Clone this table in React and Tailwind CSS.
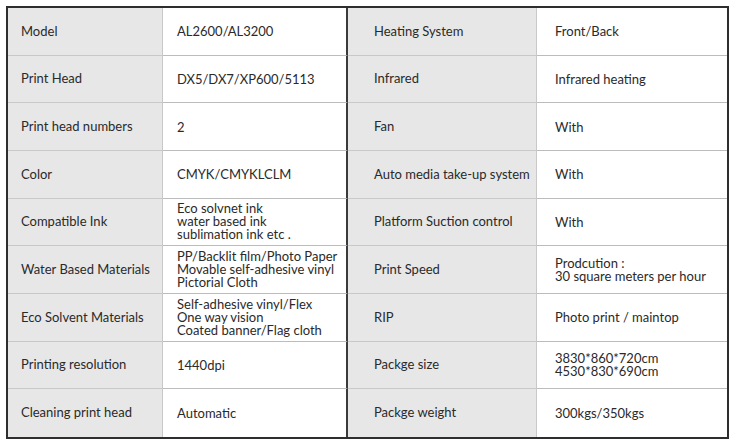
import React from 'react';

const rows = [
  ['Model', ['AL2600/AL3200'], 'Heating System', ['Front/Back']],
  ['Print Head', ['DX5/DX7/XP600/5113'], 'Infrared', ['Infrared heating']],
  ['Print head numbers', ['2'], 'Fan', ['With']],
  ['Color', ['CMYK/CMYKLCLM'], 'Auto media take-up system', ['With']],
  ['Compatible Ink', ['Eco solvnet ink', 'water based ink', 'sublimation ink etc .'], 'Platform Suction control', ['With']],
  ['Water Based Materials', ['PP/Backlit film/Photo Paper', 'Movable self-adhesive vinyl', 'Pictorial Cloth'], 'Print Speed', ['Prodcution :', '30 square meters per hour']],
  ['Eco Solvent Materials', ['Self-adhesive vinyl/Flex', 'One way vision', 'Coated banner/Flag cloth'], 'RIP', ['Photo print / maintop']],
  ['Printing resolution', ['1440dpi'], 'Packge size', ['3830*860*720cm', '4530*830*690cm']],
  ['Cleaning print head', ['Automatic'], 'Packge weight', ['300kgs/350kgs']],
];

const Lines = ({ lines }) => (
  <div className={lines.length > 1 ? 'leading-[13px]' : 'leading-[16px]'}>
    {lines.map((l, i) => (
      <div key={i}>{l}</div>
    ))}
  </div>
);

const App = () => {
  return (
    <div className="w-[734px] h-[443px] bg-white pt-[6px] pl-[6px]" style={{ fontFamily: 'Lato, "Open Sans", sans-serif' }}>
      <div className="w-[723px] h-[433px] border-2 border-[#2e2e2e] grid grid-cols-[155px_185px_189px_1fr] grid-rows-[repeat(9,1fr)] text-[13px] text-[#2a2a2a]">
        {rows.map((r, i) => {
          const last = i === rows.length - 1;
          const bb = last ? '' : 'border-b border-[#bcbcbc]';
          return (
            <React.Fragment key={i}>
              <div className={`bg-[#e7e7e7] flex items-center pl-[13px] border-r border-[#c8c8c8] ${bb}`}>{r[0]}</div>
              <div className={`bg-white flex items-center pl-[14px] border-r-2 border-r-[#3a3a3a] ${bb}`}>
                <Lines lines={r[1]} />
              </div>
              <div className={`bg-[#e7e7e7] flex items-center pl-[26px] border-r border-[#c8c8c8] ${bb}`}>{r[2]}</div>
              <div className={`bg-white flex items-center pl-[18px] ${bb}`}>
                <Lines lines={r[3]} />
              </div>
            </React.Fragment>
          );
        })}
      </div>
    </div>
  );
};

export default App;
